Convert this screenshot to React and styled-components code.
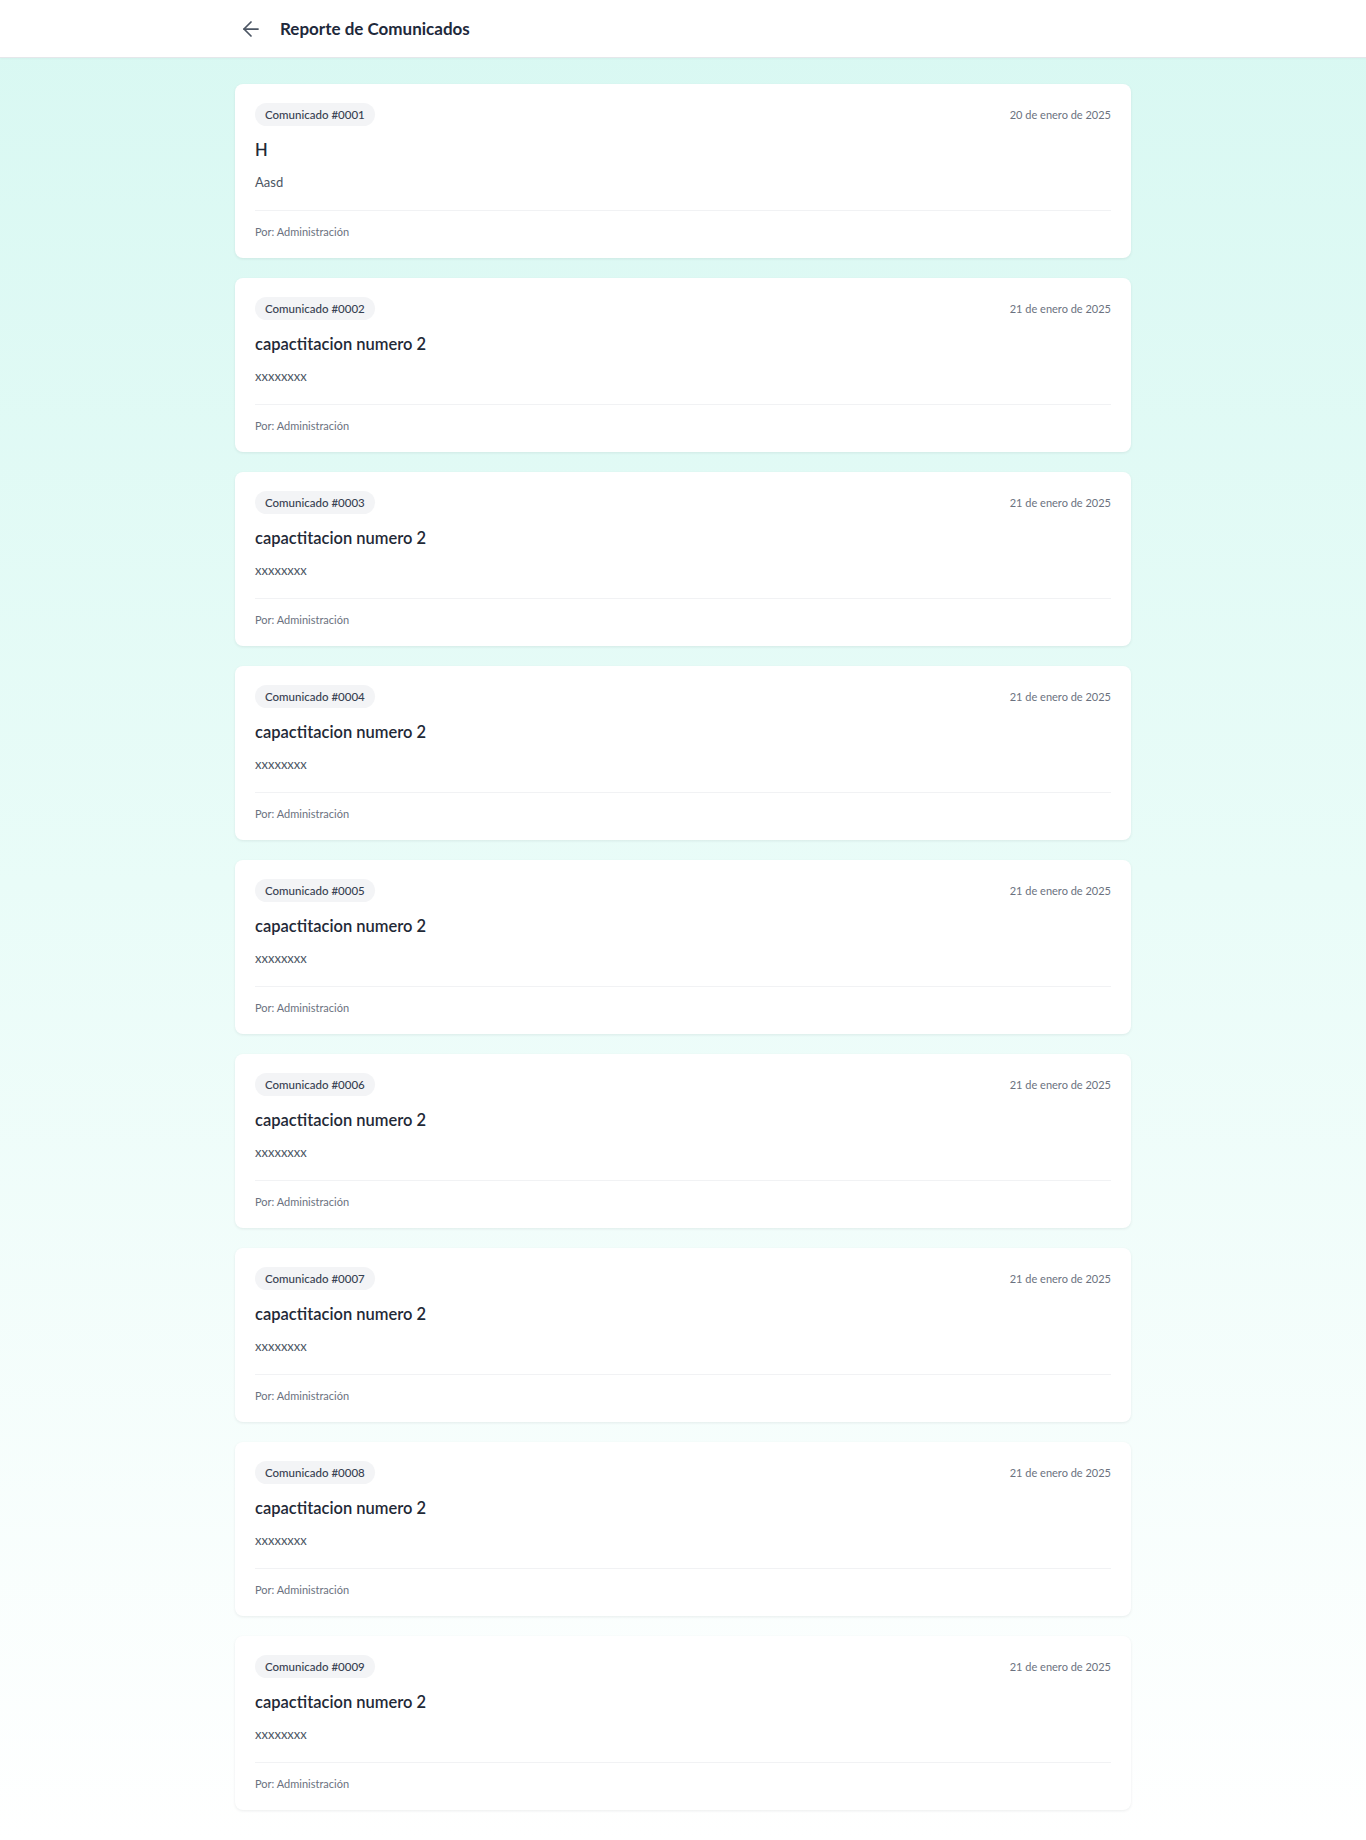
import React from 'react';
import styled, { createGlobalStyle } from 'styled-components';
import { ArrowLeft } from 'lucide-react';

const comunicados = [
  { id: 1, date: '20 de enero de 2025', title: 'H', body: 'Aasd' },
  ...[2, 3, 4, 5, 6, 7, 8, 9].map((id) => ({
    id,
    date: '21 de enero de 2025',
    title: 'capactitacion numero 2',
    body: 'xxxxxxxx',
  })),
];

const pad = (n) => String(n).padStart(4, '0');

const App = () => {
  return (
    <>
      <GlobalStyle />
      <Page>
        <Header>
          <HeaderInner>
            <BackButton aria-label="Volver">
              <ArrowLeft size={24} strokeWidth={1.75} />
            </BackButton>
            <PageTitle>Reporte de Comunicados</PageTitle>
          </HeaderInner>
        </Header>
        <Main>
          {comunicados.map((c) => (
            <Card key={c.id}>
              <CardTop>
                <Badge>Comunicado #{pad(c.id)}</Badge>
                <DateText>{c.date}</DateText>
              </CardTop>
              <CardTitle>{c.title}</CardTitle>
              <CardBody>{c.body}</CardBody>
              <CardFooter>Por: Administración</CardFooter>
            </Card>
          ))}
        </Main>
      </Page>
    </>
  );
};

const GlobalStyle = createGlobalStyle`
  * { box-sizing: border-box; }
  body {
    margin: 0;
    font-family: Lato, "Noto Sans", sans-serif;
    background: #ffffff;
  }
`;

const Page = styled.div`
  min-height: 100vh;
  background: linear-gradient(to bottom, #d8f8f2 0%, #e9fcf8 48%, #ffffff 100%);
`;

const Header = styled.header`
  background: #ffffff;
  border-bottom: 1px solid #e5e7eb;
  box-shadow: 0 1px 2px rgba(0, 0, 0, 0.03);
`;

const HeaderInner = styled.div`
  max-width: 896px;
  height: 57px;
  margin: 0 auto;
  display: flex;
  align-items: center;
  gap: 13px;
`;

const BackButton = styled.button`
  width: 32px;
  height: 32px;
  padding: 0;
  border: none;
  background: none;
  color: #4b5563;
  display: flex;
  align-items: center;
  justify-content: center;
  cursor: pointer;
`;

const PageTitle = styled.h1`
  margin: 0;
  font-size: 17px;
  font-weight: 700;
  color: #1e293b;
`;

const Main = styled.main`
  max-width: 896px;
  margin: 0 auto;
  padding: 26px 0 28px;
  display: flex;
  flex-direction: column;
  gap: 20px;
`;

const Card = styled.article`
  background: #ffffff;
  border-radius: 8px;
  box-shadow: 0 1px 3px rgba(15, 23, 42, 0.08);
  padding: 19px 20px 18px;
`;

const CardTop = styled.div`
  display: flex;
  justify-content: space-between;
  align-items: center;
`;

const Badge = styled.span`
  background: #f3f4f6;
  color: #374151;
  border-radius: 9999px;
  padding: 4px 10px;
  font-size: 11.5px;
  line-height: 15px;
  font-weight: 500;
`;

const DateText = styled.span`
  font-size: 11px;
  color: #6b7280;
`;

const CardTitle = styled.h2`
  margin: 10px 0 0;
  font-size: 16.5px;
  line-height: 28px;
  font-weight: 600;
  color: #1f2937;
`;

const CardBody = styled.p`
  margin: 8px 0 0;
  font-size: 13px;
  line-height: 20px;
  color: #4b5563;
`;

const CardFooter = styled.div`
  margin-top: 18px;
  padding-top: 13px;
  border-top: 1px solid #f1f2f4;
  font-size: 11px;
  line-height: 16px;
  color: #6b7280;
`;

export default App;
